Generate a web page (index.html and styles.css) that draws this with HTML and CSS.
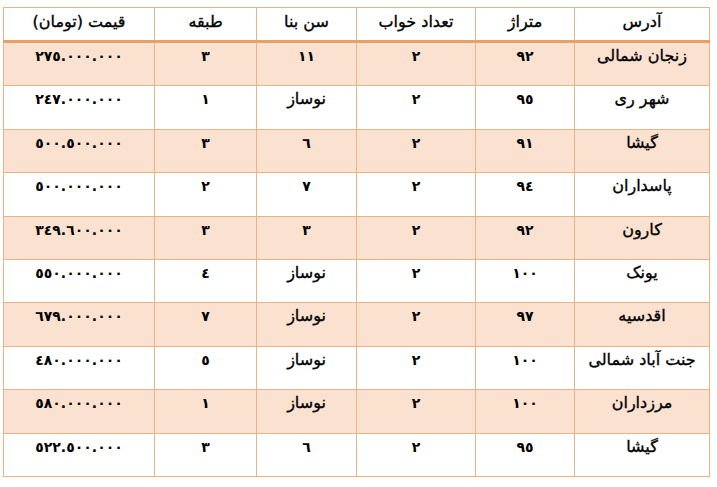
FILE: index.html
```html
<!DOCTYPE html>
<html lang="fa" dir="rtl">
<head>
<meta charset="utf-8">
<link rel="stylesheet" href="styles.css">
</head>
<body>
<table class="grid">
  <colgroup>
    <col class="c-addr"><col class="c-area"><col class="c-beds"><col class="c-age"><col class="c-floor"><col class="c-price">
  </colgroup>
  <thead>
    <tr><th>آدرس</th><th>متراژ</th><th>تعداد خواب</th><th>سن بنا</th><th>طبقه</th><th>قیمت (تومان)</th></tr>
  </thead>
  <tbody>
    <tr class="alt"><td>زنجان شمالی</td><td class="num">٩٢</td><td class="num">٢</td><td class="num">١١</td><td class="num">٣</td><td class="num">٢٧٥.٠٠٠.٠٠٠</td></tr>
    <tr><td>شهر ری</td><td class="num">٩٥</td><td class="num">٢</td><td>نوساز</td><td class="num">١</td><td class="num">٢٤٧.٠٠٠.٠٠٠</td></tr>
    <tr class="alt"><td>گیشا</td><td class="num">٩١</td><td class="num">٢</td><td class="num">٦</td><td class="num">٣</td><td class="num">٥٠٠.٥٠٠.٠٠٠</td></tr>
    <tr><td>پاسداران</td><td class="num">٩٤</td><td class="num">٢</td><td class="num">٧</td><td class="num">٢</td><td class="num">٥٠٠.٠٠٠.٠٠٠</td></tr>
    <tr class="alt"><td>کارون</td><td class="num">٩٢</td><td class="num">٢</td><td class="num">٣</td><td class="num">٣</td><td class="num">٣٤٩.٦٠٠.٠٠٠</td></tr>
    <tr><td>یونک</td><td class="num">١٠٠</td><td class="num">٢</td><td>نوساز</td><td class="num">٤</td><td class="num">٥٥٠.٠٠٠.٠٠٠</td></tr>
    <tr class="alt"><td>اقدسیه</td><td class="num">٩٧</td><td class="num">٢</td><td>نوساز</td><td class="num">٧</td><td class="num">٦٧٩.٠٠٠.٠٠٠</td></tr>
    <tr><td>جنت آباد شمالی</td><td class="num">١٠٠</td><td class="num">٢</td><td>نوساز</td><td class="num">٥</td><td class="num">٤٨٠.٠٠٠.٠٠٠</td></tr>
    <tr class="alt"><td>مرزداران</td><td class="num">١٠٠</td><td class="num">٢</td><td>نوساز</td><td class="num">١</td><td class="num">٥٨٠.٠٠٠.٠٠٠</td></tr>
    <tr><td>گیشا</td><td class="num">٩٥</td><td class="num">٢</td><td class="num">٦</td><td class="num">٣</td><td class="num">٥٢٢.٥٠٠.٠٠٠</td></tr>
  </tbody>
</table>
</body>
</html>
```

FILE: styles.css
```css
html, body {
  margin: 0;
  background: #ffffff;
}
body {
  padding: 7px 7px 0 5px;
  font-family: "DejaVu Sans", sans-serif;
  color: #000;
}
.grid {
  border-collapse: collapse;
  table-layout: fixed;
  width: 706px;
  font-size: 16px;
}
.c-addr { width: 135px; }
.c-area { width: 99px; }
.c-beds { width: 119px; }
.c-age { width: 100px; }
.c-floor { width: 102px; }
.c-price { width: 151px; }
.grid th, .grid td {
  border: 1px solid #ebb385;
  text-align: center;
  vertical-align: top;
  padding: 2px 0 0 0;
  line-height: 22px;
  font-weight: normal;
  white-space: nowrap;
  -webkit-text-stroke: 0.35px #000;
}
.grid td.num {
  font-size: 14px;
  font-weight: bold;
  padding-top: 3px;
  line-height: 21px;
  -webkit-text-stroke: 0;
}
.grid thead th {
  height: 29px;
  padding-top: 3px;
  border-bottom: 3px solid #e8a064;
}
.grid tbody td {
  height: 40.4px;
}
.grid tbody td.num {
  height: 39.4px;
}
.grid tr.alt td {
  background: #fbe2d0;
}
```
